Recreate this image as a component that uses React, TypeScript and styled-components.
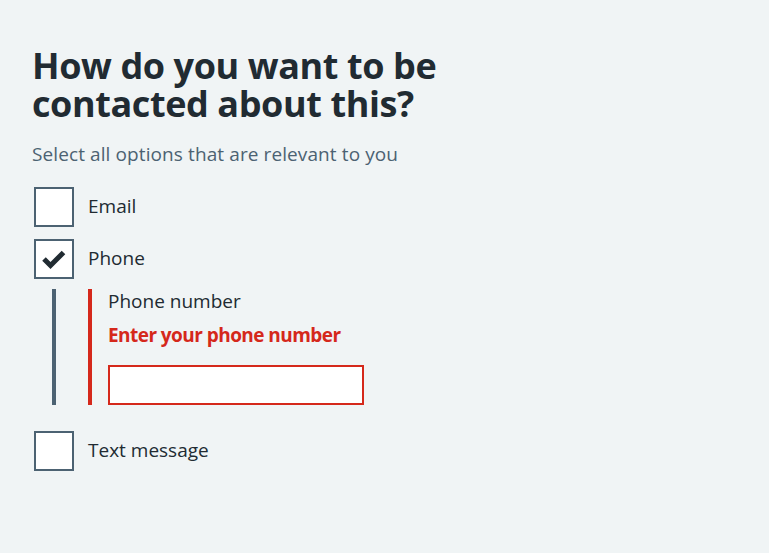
import React, { useState } from "react";
import styled, { createGlobalStyle } from "styled-components";

const GlobalStyle = createGlobalStyle`
  html, body {
    margin: 0;
    padding: 0;
    background: #f0f4f5;
  }
  body {
    font-family: "Open Sans", "Noto Sans", Arial, sans-serif;
    color: #212b32;
    -webkit-font-smoothing: antialiased;
  }
`;

const Page = styled.main`
  min-height: 553px;
  box-sizing: border-box;
  padding: 47px 32px 40px;
  background: #f0f4f5;
`;

const Fieldset = styled.fieldset`
  border: 0;
  margin: 0;
  padding: 0;
  min-width: 0;
`;

const Legend = styled.legend`
  padding: 0;
  margin: 0;
`;

const Heading = styled.h1`
  margin: 0;
  font-size: 36px;
  line-height: 38px;
  font-weight: 700;
  letter-spacing: -0.4px;
  color: #212b32;
  max-width: 440px;
`;

const Hint = styled.div`
  margin-top: 17px;
  font-size: 19px;
  line-height: 28px;
  letter-spacing: 0.1px;
  color: #4c6272;
`;

const Checkboxes = styled.div`
  margin-top: 19px;
  padding-left: 2px;
  display: flex;
  flex-direction: column;
`;

const Item = styled.label<{ $gapAfter: number }>`
  display: flex;
  align-items: flex-start;
  cursor: pointer;
  margin-bottom: ${(p) => p.$gapAfter}px;
`;

const HiddenInput = styled.input`
  position: absolute;
  opacity: 0;
  width: 1px;
  height: 1px;
  margin: 0;
`;

const Box = styled.span`
  flex: none;
  box-sizing: border-box;
  width: 40px;
  height: 40px;
  border: 2px solid #4c6272;
  background: #ffffff;
  display: flex;
  align-items: center;
  justify-content: center;
`;

const LabelText = styled.span`
  padding-top: 7px;
  padding-left: 14px;
  font-size: 19px;
  line-height: 24px;
  color: #212b32;
`;

const Conditional = styled.div`
  margin-left: 18px;
  margin-bottom: 26px;
  border-left: 4px solid #4c6272;
  padding-left: 32px;
`;

const ErrorGroup = styled.div`
  border-left: 4px solid #d5281b;
  padding-left: 16px;
  display: flex;
  flex-direction: column;
  align-items: flex-start;
`;

const FieldLabel = styled.label`
  font-size: 19px;
  line-height: 24px;
  color: #212b32;
`;

const ErrorMessage = styled.span`
  margin-top: 10px;
  font-size: 19px;
  line-height: 24px;
  font-weight: 700;
  letter-spacing: -0.55px;
  color: #d5281b;
`;

const TextInput = styled.input`
  margin-top: 18px;
  box-sizing: border-box;
  width: 256px;
  height: 40px;
  border: 2px solid #d5281b;
  border-radius: 0;
  background: #ffffff;
  padding: 4px 8px;
  font-family: inherit;
  font-size: 19px;
  color: #212b32;
  outline: none;
`;

const Check = () => (
  <svg width="24" height="20" viewBox="0 0 24 20" aria-hidden="true" style={{ marginTop: 2 }}>
    <polyline
      points="2,9 8.5,15.5 21.5,2.5"
      fill="none"
      stroke="#212b32"
      strokeWidth="5"
      strokeLinejoin="miter"
      strokeLinecap="butt"
    />
  </svg>
);

export default function App() {
  const [checked, setChecked] = useState<Record<string, boolean>>({
    email: false,
    phone: true,
    text: false,
  });
  const toggle = (k: string) => setChecked((c) => ({ ...c, [k]: !c[k] }));

  return (
    <>
      <GlobalStyle />
      <Page>
        <Fieldset>
          <Legend>
            <Heading>How do you want to be contacted about this?</Heading>
          </Legend>
          <Hint>Select all options that are relevant to you</Hint>
          <Checkboxes>
            <Item $gapAfter={12}>
              <HiddenInput type="checkbox" checked={checked.email} onChange={() => toggle("email")} />
              <Box>{checked.email && <Check />}</Box>
              <LabelText>Email</LabelText>
            </Item>
            <Item $gapAfter={10}>
              <HiddenInput type="checkbox" checked={checked.phone} onChange={() => toggle("phone")} />
              <Box>{checked.phone && <Check />}</Box>
              <LabelText>Phone</LabelText>
            </Item>
            {checked.phone && (
              <Conditional>
                <ErrorGroup>
                  <FieldLabel htmlFor="phone-number">Phone number</FieldLabel>
                  <ErrorMessage>Enter your phone number</ErrorMessage>
                  <TextInput id="phone-number" type="tel" />
                </ErrorGroup>
              </Conditional>
            )}
            <Item $gapAfter={0}>
              <HiddenInput type="checkbox" checked={checked.text} onChange={() => toggle("text")} />
              <Box>{checked.text && <Check />}</Box>
              <LabelText>Text message</LabelText>
            </Item>
          </Checkboxes>
        </Fieldset>
      </Page>
    </>
  );
}
